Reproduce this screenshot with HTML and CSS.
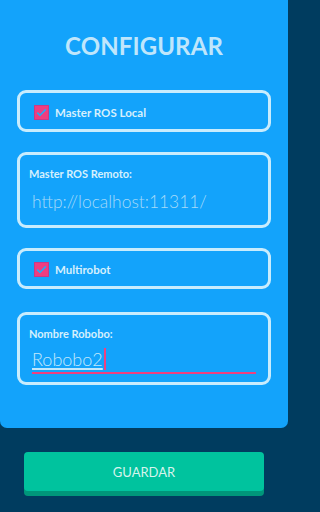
FILE: index.html
```html
<!DOCTYPE html>
<html lang="es">
<head>
<meta charset="utf-8">
<link rel="stylesheet" href="styles.css">
</head>
<body>
<div class="panel">
  <h1 class="title">CONFIGURAR</h1>
  <div class="box box-check box1">
    <span class="check"><svg width="15" height="15" viewBox="0 0 15 15"><rect x="0.5" y="0.5" width="14" height="14" fill="#f03d7f" stroke="#c93a86"/><polyline points="3.2,7.6 6,10.4 11.8,4.4" fill="none" stroke="#2aa6f3" stroke-width="1.6"/></svg></span>
    <span class="check-label">Master ROS Local</span>
  </div>
  <div class="box box-field box2">
    <div class="field-label">Master ROS Remoto:</div>
    <div class="field-input placeholder">http://localhost:11311/</div>
  </div>
  <div class="box box-check box3">
    <span class="check"><svg width="15" height="15" viewBox="0 0 15 15"><rect x="0.5" y="0.5" width="14" height="14" fill="#f03d7f" stroke="#c93a86"/><polyline points="3.2,7.6 6,10.4 11.8,4.4" fill="none" stroke="#2aa6f3" stroke-width="1.6"/></svg></span>
    <span class="check-label">Multirobot</span>
  </div>
  <div class="box box-field box4">
    <div class="field-label">Nombre Robobo:</div>
    <div class="field-input active"><span class="typed">Robobo2</span><span class="caret"></span></div>
  </div>
</div>
<div class="footer">
  <button class="save">GUARDAR</button>
</div>
</body>
</html>
```
FILE: styles.css
```css
html, body {
  margin: 0;
  padding: 0;
}
html {
  background: #003c5f;
}
body {
  width: 288px;
  height: 512px;
  background: #003c5f;
  font-family: Lato, "Open Sans", sans-serif;
  overflow: hidden;
}
.panel {
  background: #13a3fb;
  height: 428px;
  border-radius: 0 0 7px 7px;
  padding-top: 32px;
  box-sizing: border-box;
  display: flex;
  flex-direction: column;
}
.title {
  margin: 0;
  text-align: center;
  font-size: 24px;
  line-height: 28px;
  font-weight: 700;
  color: #bfe6fb;
  letter-spacing: 0.1px;
}
.box {
  margin: 0 17px;
  border: 3px solid #c8ecfd;
  border-radius: 9px;
  box-sizing: border-box;
}
.box1 { margin-top: 30px; height: 42px; }
.box2 { margin-top: 20px; height: 76px; }
.box3 { margin-top: 20px; height: 41px; }
.box4 { margin-top: 23px; height: 73px; }
.box-check {
  display: flex;
  align-items: center;
  padding-left: 14px;
  padding-top: 2px;
}
.check {
  width: 15px;
  height: 15px;
  display: block;
}
.check svg { display: block; }
.check-label {
  margin-left: 6px;
  font-size: 11.5px;
  font-weight: 700;
  color: #d6f0fd;
}
.box-field {
  padding: 12px 12px 0 9px;
}
.field-label {
  font-size: 11px;
  font-weight: 700;
  color: #d6f0fd;
  line-height: 14px;
}
.field-input {
  margin-top: 10px;
  margin-left: 3px;
  font-size: 17.4px;
  font-weight: 300;
  line-height: 22px;
}
.placeholder {
  color: #a6daf9;
}
.active {
  margin-top: 7px;
  font-size: 18px;
  border-bottom: 2px solid #f0407f;
  width: 224px;
  color: #c2e8fc;
  display: flex;
  align-items: flex-end;
  padding-bottom: 2px;
}
.typed {
  text-decoration: underline;
  text-decoration-color: #c2e8fc;
  text-decoration-thickness: 1.5px;
  text-underline-offset: 2px;
}
.caret {
  width: 2px;
  height: 22px;
  background: #f0407f;
  margin-left: 1px;
}
.footer {
  padding: 24px 24px 0;
}
.save {
  display: block;
  width: 240px;
  height: 39px;
  border: 0;
  border-radius: 4px;
  background: #00c39e;
  box-shadow: 0 5px 0 #00967a;
  color: #d6f4ed;
  font-family: Lato, "Open Sans", sans-serif;
  font-size: 13px;
  font-weight: 400;
  padding: 0;
}
```
